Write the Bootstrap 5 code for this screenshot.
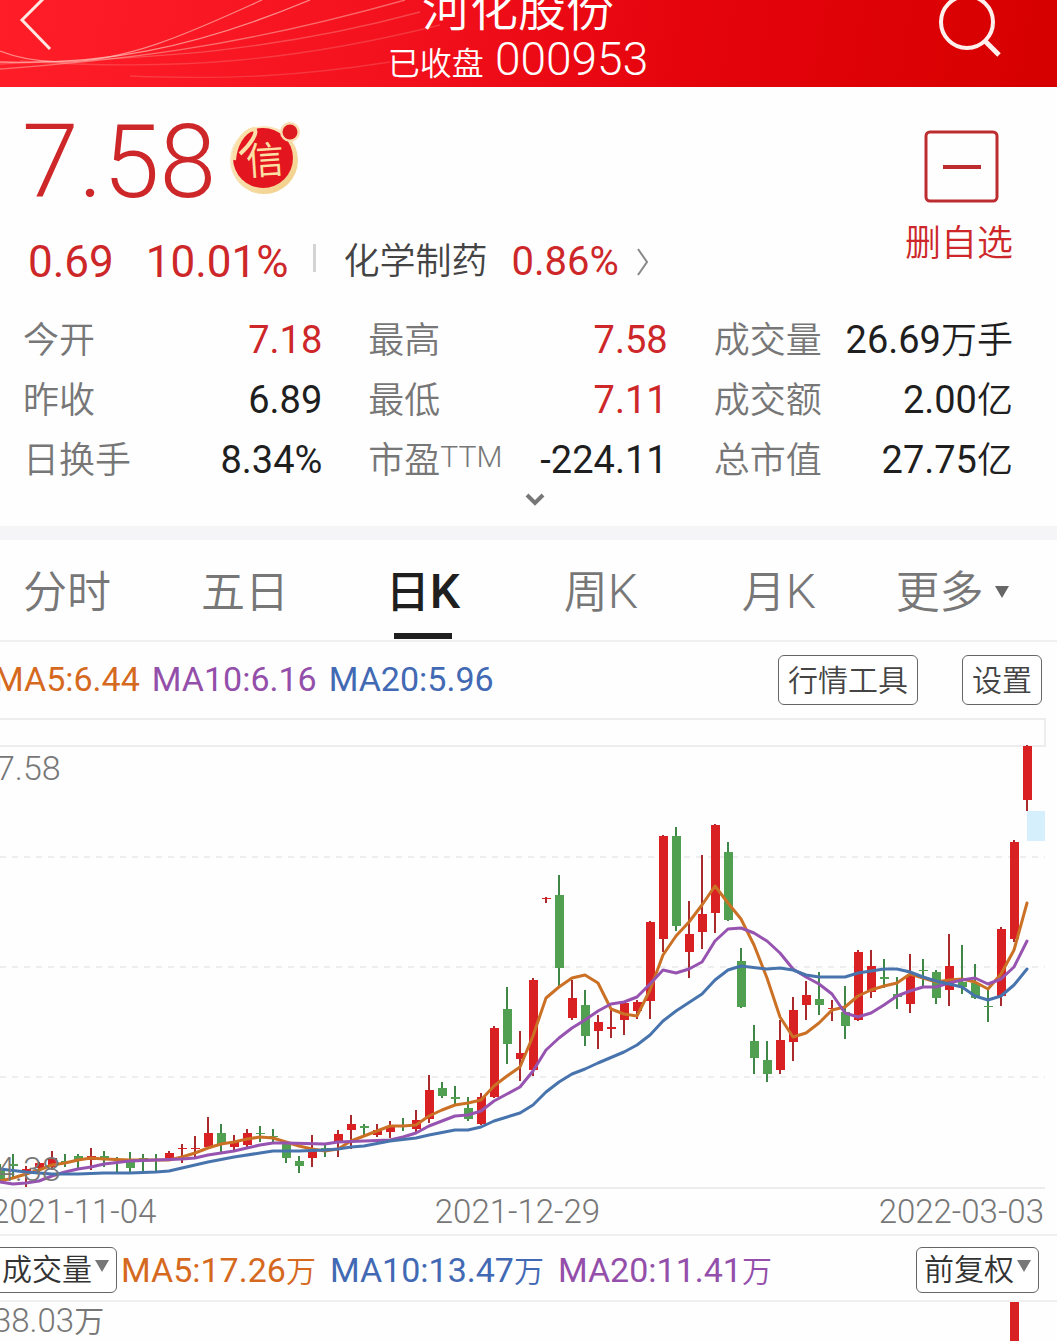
<!DOCTYPE html>
<html lang="zh-CN">
<head>
<meta charset="utf-8">
<meta name="viewport" content="width=device-width, initial-scale=1">
<title>河化股份 000953</title>
<link rel="stylesheet" href="https://cdn.jsdelivr.net/npm/bootstrap@5.3.0/dist/css/bootstrap.min.css">
<style>
:root { --up: #cd2729; --ink: #1f1f1f; --mute: #777; --ma5: #d5691e; --ma10: #934fa9; --ma20: #4269b3; --rule: #f0f0f1; }
body { font-family: Roboto, "Noto Sans CJK SC", sans-serif; font-weight: 350; color: var(--ink); background: #fefefe; overflow-x: hidden; }
button, select { font-family: inherit; font-weight: inherit; }
.plain { background: none; border: 0; padding: 0; }
.up { color: var(--up); }
.wan { font-weight: 350; }
.topbar { height: 87px; padding: 0 55px 0 18px; background: linear-gradient(100deg, #ff1e28 0%, #f3121e 35%, #e5040c 65%, #d60000 100%); }
.topbar .swirl { width: 530px; height: 87px; }
.back-btn { width: 80px; height: 87px; }
.stock-name { font-size: 48px; line-height: 58px; }
.stock-code { font-size: 46px; line-height: 40px; padding-bottom: 3px; font-weight: 300; }
.stock-code small { font-size: 32px; font-weight: 350; }
.quote { padding: 0 44px 0 22px; }
.price { font-size: 102px; line-height: 150px; }
.change { font-size: 44px; line-height: 50px; padding-left: 6px; font-weight: 400; }
.sector { font-size: 36px; color: #444; text-decoration: none; font-weight: 350; }
.sector .up { font-size: 40px; font-weight: 400; }
.bar-sep { width: 3px; height: 28px; background: #d4d4d4; }
.watch-btn { font-size: 36px; line-height: 50px; padding-top: 43px; }
.stats { display: grid; grid-template-columns: repeat(3, 1fr); grid-auto-rows: 60px; column-gap: 46px; margin: 24px 0 0; padding: 0 44px 0 23px; font-size: 36px; line-height: 60px; white-space: nowrap; }
.stats dt { font-weight: 350; color: var(--mute); }
.stats dd { margin: 0; font-size: 38px; line-height: 58px; font-weight: 400; }
.stats .wan { font-size: 36px; }
.stats .ttm { font-size: 30px; line-height: 52px; font-weight: 300; }
.expand { height: 35px; padding-left: 12px; }
.band { height: 14px; background: #f5f4f6; }
.periods { height: 100px; margin: 0 11px 0 -22px; display: grid; grid-template-columns: repeat(6, 1fr); font-size: 44px; }
.periods button { color: var(--mute); position: relative; white-space: nowrap; padding-top: 5px; }
.periods .latin { font-size: 48px; line-height: 1; }
.periods .on { color: var(--ink); font-weight: 500; }
.periods .on::after { content: ""; position: absolute; bottom: 1px; left: calc(50% - 29px); width: 58px; height: 6px; background: var(--ink); }
.ruled { border-bottom: 2px solid var(--rule); }
.ruled-top { border-top: 2px solid var(--rule); }
.ma-row { height: 78px; padding-right: 15px; margin-left: -6px; font-size: 34px; gap: 12px; white-space: nowrap; }
.ma-row > span { padding-bottom: 2px; }
.ma5, .ma10, .ma20 { font-weight: 400; }
.ma5 { color: var(--ma5); } .ma10 { color: var(--ma10); } .ma20 { color: var(--ma20); }
.tool { height: 50px; padding: 0 9px; font-size: 30px; color: #444; background: #fff; border: 1px solid #666; border-radius: 6px; }
.tool + .tool { margin-left: 32px; }
.kline { display: block; width: 100%; height: auto; }
.dates { height: 44px; margin: 0 13px 0 -9px; font-size: 33px; color: var(--mute); }
.vol-row { height: 68px; padding-right: 18px; font-size: 34px; gap: 14px; white-space: nowrap; }
.vol-row > span { padding-top: 4px; }
.vol-row .wan, .vol-axis .wan { font-size: 30px; }
.pick { position: relative; }
.pick select { appearance: none; height: 46px; padding: 0 24px 0 7px; font-size: 30px; line-height: 40px; color: #333; background: #fff; border: 1px solid #666; border-radius: 6px; }
.pick svg { position: absolute; right: 7px; top: 16px; pointer-events: none; }
.pick-left { margin-left: -6px; margin-right: -10px; }
.vol-axis { height: 39px; overflow: hidden; font-size: 33px; line-height: 38px; color: var(--mute); margin-left: -7px; padding-right: 38px; }
.vol-bar { width: 9px; height: 39px; background: #d92124; }
</style>
<script src="https://cdn.jsdelivr.net/npm/bootstrap@5.3.0/dist/js/bootstrap.bundle.min.js"></script>
</head>
<body>
<header class="topbar d-flex align-items-end justify-content-between position-relative overflow-hidden text-white">
  <svg class="swirl position-absolute top-0 start-0" viewBox="0 0 530 87" fill="none" stroke="#ffc0b8" stroke-width="1.3" aria-hidden="true">
    <path d="M0 51Q25 61 60 62C130 62 200 28 262 0" opacity=".65"/>
    <path d="M0 62C100 65 190 50 310 0" opacity=".7"/>
    <path d="M0 69C110 60 220 52 405 0" opacity=".5"/>
    <path d="M0 64C120 58 250 58 420 12" opacity=".3"/>
    <path d="M20 61C180 72 300 60 440 25" opacity=".22"/>
    <path d="M130 76C230 80 300 76 390 62" opacity=".2"/>
  </svg>
  <button class="plain back-btn text-start position-relative" aria-label="返回"><svg width="36" height="87" viewBox="0 0 36 87" fill="none" stroke="#ffe6e0" stroke-width="3"><path d="M30-6L4 20L32 49"/></svg></button>
  <div class="text-center position-relative">
    <div class="stock-name">河化股份</div>
    <div class="stock-code"><small>已收盘</small> 000953</div>
  </div>
  <button class="plain position-relative" aria-label="搜索"><svg class="d-block" width="64" height="87" viewBox="0 0 64 87" fill="none" stroke="#fff0ee" stroke-width="4"><circle cx="29" cy="22" r="26"/><path d="M46 40L61 55" stroke-width="5"/></svg></button>
</header>

<main>
  <section class="quote d-flex justify-content-between">
    <div>
      <div class="d-flex align-items-center">
        <span class="price up">7.58</span>
        <svg class="ms-2 mb-2" width="76" height="76" viewBox="226 118 76 76" role="img" aria-label="信">
          <defs><linearGradient id="gold" x2="1" y2="1"><stop offset="0" stop-color="#fbeed2"/><stop offset="1" stop-color="#f2cd82"/></linearGradient></defs>
          <circle cx="266" cy="158" r="34" fill="url(#gold)"/>
          <circle cx="265" cy="156" r="30" fill="#e3161f"/>
          <path d="M236 158C237 145 244 129 256 127C261 130 252 143 242 152" fill="none" stroke="#fae0a8" stroke-width="4"/>
          <text x="267" y="172" text-anchor="middle" font-size="38" font-weight="400" fill="#fbdfa4" transform="rotate(-4 267 158)">信</text>
          <circle cx="292" cy="130" r="10" fill="#f8ddb0"/><circle cx="292" cy="130" r="7.5" fill="#dc1a20"/>
        </svg>
      </div>
      <div class="change d-flex align-items-center">
        <span class="up">0.69</span><span class="up ms-4 ps-2">10.01%</span>
        <span class="bar-sep ms-4 mb-2"></span>
        <a class="sector d-flex align-items-center ms-4 ps-1" href="#">化学制药<span class="up ms-4">0.86%</span>
          <svg class="ms-3" width="16" height="28" viewBox="0 0 16 28" fill="none" stroke="#888" stroke-width="2"><path d="M3 1L12 14L3 27"/></svg></a>
      </div>
    </div>
    <button class="plain watch-btn up d-flex flex-column align-items-center">
      <svg class="mb-3" width="80" height="73" viewBox="-4 0 80 73" fill="none" stroke="#bd2c2e" stroke-width="3"><rect x="3" y="2" width="71" height="69" rx="4"/><path d="M20 37H58" stroke-width="4"/></svg>
      删自选
    </button>
  </section>

  <dl class="stats">
    <div class="d-flex justify-content-between"><dt>今开</dt><dd class="up">7.18</dd></div>
    <div class="d-flex justify-content-between"><dt>最高</dt><dd class="up">7.58</dd></div>
    <div class="d-flex justify-content-between"><dt>成交量</dt><dd>26.69<span class="wan">万手</span></dd></div>
    <div class="d-flex justify-content-between"><dt>昨收</dt><dd>6.89</dd></div>
    <div class="d-flex justify-content-between"><dt>最低</dt><dd class="up">7.11</dd></div>
    <div class="d-flex justify-content-between"><dt>成交额</dt><dd>2.00<span class="wan">亿</span></dd></div>
    <div class="d-flex justify-content-between"><dt>日换手</dt><dd>8.34%</dd></div>
    <div class="d-flex justify-content-between"><dt class="d-flex">市盈<span class="ttm">TTM</span></dt><dd>-224.11</dd></div>
    <div class="d-flex justify-content-between"><dt>总市值</dt><dd>27.75<span class="wan">亿</span></dd></div>
  </dl>
  <button class="plain expand d-block w-100" aria-label="展开"><svg class="d-block mx-auto" width="20" height="34" viewBox="0 0 20 34" fill="none" stroke="#777" stroke-width="4"><path d="M2 3L10 11L18 3"/></svg></button>
  <div class="band"></div>

  <nav class="periods">
    <button class="plain">分时</button><button class="plain">五日</button><button class="plain on">日<span class="latin">K</span></button><button class="plain">周<span class="latin">K</span></button><button class="plain">月<span class="latin">K</span></button>
    <button class="plain pe-2">更多 <svg width="16" height="14" viewBox="0 0 16 14" class="mb-2" fill="#666"><path d="M1 1H15L8 13Z"/></svg></button>
  </nav>

  <div class="ma-row d-flex align-items-center ruled-top">
    <span class="ma5">MA5:6.44</span><span class="ma10">MA10:6.16</span><span class="ma20">MA20:5.96</span>
    <button class="tool ms-auto">行情工具</button><button class="tool">设置</button>
  </div>

  <svg class="kline" viewBox="0 718 1057 472" role="img" aria-label="日K线图">
    <g fill="none" stroke="#ededee" stroke-width="2"><path d="M0 719H1045V746H0M0 1188H1045"/><path d="M0 857H1045M0 967H1045M0 1077H1045" stroke-width="1" stroke="#dedede" stroke-dasharray="6 6"/></g>
    <rect x="1027" y="811" width="18" height="30" fill="#d5f0fc"/>
    <g id="candles"></g>
    <g fill="none" stroke-width="3" stroke-linejoin="round" stroke-linecap="round">
      <polyline stroke="#cb7126" points="0,1181 13,1178 26,1174 39,1170 52,1165 65,1163 78,1160 91,1158 104,1159 130,1160 169,1160 182,1157 195,1153 208,1148 221,1144 234,1142 247,1139 260,1137 273,1138 286,1142 299,1146 312,1149 325,1151 338,1149 351,1141 364,1136 377,1131 390,1126 403,1126 416,1125 429,1116 442,1110 455,1105 468,1103 481,1100 494,1086 507,1076 520,1067 533,1036 546,998 559,987 572,978 585,975 598,983 611,1009 624,1014 637,1016 650,990 663,955 676,936 689,922 702,905 715,886 728,903 741,919 754,945 767,978 780,1017 793,1037 806,1033 819,1023 832,1010 845,1007 858,996 871,990 884,986 897,983 910,974 923,978 936,982 949,980 962,979 975,982 988,989 1001,974 1014,950 1027,903"/>
      <polyline stroke="#9753b0" points="0,1182 13,1184 26,1183 39,1181 52,1176 65,1172 78,1169 91,1167 104,1164 130,1161 156,1160 182,1159 195,1158 208,1155 234,1151 247,1148 260,1145 273,1143 286,1143 325,1144 338,1142 364,1141 390,1140 403,1137 416,1133 429,1126 442,1121 455,1116 468,1115 481,1111 494,1101 520,1087 533,1071 546,1050 559,1038 572,1028 585,1020 598,1011 611,1004 624,1002 637,997 650,984 663,970 676,973 689,969 702,962 715,941 728,929 741,928 754,933 767,941 780,953 793,969 806,977 819,984 832,994 845,1013 858,1017 871,1013 884,1005 897,996 910,991 923,987 936,987 949,983 962,980 975,978 988,984 1001,979 1014,967 1027,941"/>
      <polyline stroke="#4874ae" points="0,1169 26,1172 52,1174 78,1174 104,1173 130,1173 156,1172 169,1171 182,1168 208,1162 234,1157 260,1153 273,1151 299,1151 325,1150 338,1149 351,1147 364,1146 390,1141 416,1138 429,1135 455,1130 468,1130 481,1127 494,1121 520,1113 533,1105 546,1092 559,1082 572,1074 585,1069 598,1063 624,1052 637,1045 650,1035 663,1021 676,1011 702,994 715,980 728,970 741,966 767,969 780,968 793,970 806,975 819,977 845,977 858,973 884,969 897,969 910,972 923,977 936,981 962,987 975,996 988,1000 1001,996 1014,985 1027,969"/>
    </g>
    <g font-size="34" fill="#777"><text x="-4" y="780">7.58</text><text x="-4" y="1181">4.38</text></g>
  </svg>

  <div class="dates d-flex justify-content-between align-items-center"><span>2021-11-04</span><span>2021-12-29</span><span>2022-03-03</span></div>

  <div class="vol-row ruled ruled-top d-flex align-items-center">
    <div class="pick pick-left"><select aria-label="指标"><option>成交量</option></select><svg width="16" height="14" viewBox="0 0 16 14" fill="#777"><path d="M1 1H15L8 13Z"/></svg></div>
    <span class="ma5">MA5:17.26<span class="wan">万</span></span><span class="ma20">MA10:13.47<span class="wan">万</span></span><span class="ma10">MA20:11.41<span class="wan">万</span></span>
    <div class="pick ms-auto"><select aria-label="复权"><option>前复权</option></select><svg width="16" height="14" viewBox="0 0 16 14" fill="#777"><path d="M1 1H15L8 13Z"/></svg></div>
  </div>
  <div class="vol-axis d-flex justify-content-between align-items-end"><span>38.03<span class="wan">万</span></span><span class="vol-bar"></span></div>
</main>

<script>
// one row per trading day, 13 units apart: wick top, wick bottom, body top, body bottom, 1 = up / 0 = down
const days = [
[1164,1182,1168,1180,0],[1154,1177,1164,1166,0],[1166,1187,1169,1173,1],[1162,1172,1163,1168,1],[1151,1170,1158,1167,1],
[1154,1167,1161,1162,0],[1154,1168,1156,1160,0],[1148,1170,1156,1160,1],[1151,1167,1156,1158,0],[1157,1173,1160,1161,0],
[1152,1174,1162,1168,0],[1154,1173,1158,1159,0],[1154,1171,1159,1160,0],[1151,1158,1153,1158,1],[1144,1163,1148,1149,1],
[1136,1159,1148,1149,1],[1117,1147,1133,1147,1],[1124,1152,1133,1144,0],[1135,1151,1142,1147,1],[1129,1147,1133,1145,1],
[1126,1142,1133,1134,0],[1129,1142,1136,1137,0],[1142,1163,1144,1158,0],[1156,1173,1161,1166,0],[1135,1167,1150,1158,1],
[1143,1157,1148,1150,0],[1130,1157,1134,1143,1],[1115,1149,1124,1130,1],[1124,1135,1126,1128,0],[1124,1137,1130,1135,1],
[1121,1138,1127,1132,1],[1118,1131,1126,1127,0],[1110,1133,1120,1129,1],[1075,1123,1090,1119,1],[1082,1098,1088,1096,0],
[1086,1104,1097,1099,0],[1097,1121,1108,1119,0],[1093,1125,1097,1124,1],[1026,1098,1028,1097,1],[987,1064,1009,1044,0],
[1031,1081,1053,1059,1],[978,1076,980,1070,1],[897,903,898,899,1],[875,986,895,968,0],[980,1020,998,1018,1],
[990,1046,1005,1036,0],[1015,1049,1022,1031,1],[1010,1038,1027,1029,1],[1002,1035,1003,1020,1],[1000,1019,1002,1011,1],
[921,1019,922,1001,1],[835,952,836,939,1],[827,931,836,926,0],[901,978,934,952,1],[855,949,914,932,1],
[824,933,825,913,1],[842,921,852,920,0],[948,1008,961,1007,0],[1025,1074,1041,1058,0],[1041,1082,1060,1074,0],
[1020,1074,1040,1070,1],[997,1061,1010,1042,1],[981,1020,995,1005,1],[972,1015,999,1005,0],[1000,1021,1008,1009,1],
[986,1039,1012,1026,0],[950,1021,952,1020,1],[950,998,966,992,1],[959,988,977,979,0],[977,1009,994,997,0],
[954,1013,975,1004,1],[959,987,970,971,0],[970,1004,972,998,0],[934,1006,966,990,1],[945,994,982,987,0],
[964,999,983,998,0],[987,1022,1006,1007,0],[927,1006,929,996,1],[840,942,842,939,1],[745,811,746,800,1]];
document.getElementById('candles').innerHTML = days.map(([hi, lo, top, bot, up], i) => {
  const x = i * 13;
  return `<rect x="${x - 1}" y="${hi}" width="2" height="${lo - hi}" fill="${up ? '#a92a2c' : '#3f8746'}"/>` +
         `<rect x="${x - 4}" y="${top}" width="9" height="${bot - top}" fill="${up ? '#d92124' : '#519f51'}"/>`;
}).join('');
</script>
</body>
</html>
